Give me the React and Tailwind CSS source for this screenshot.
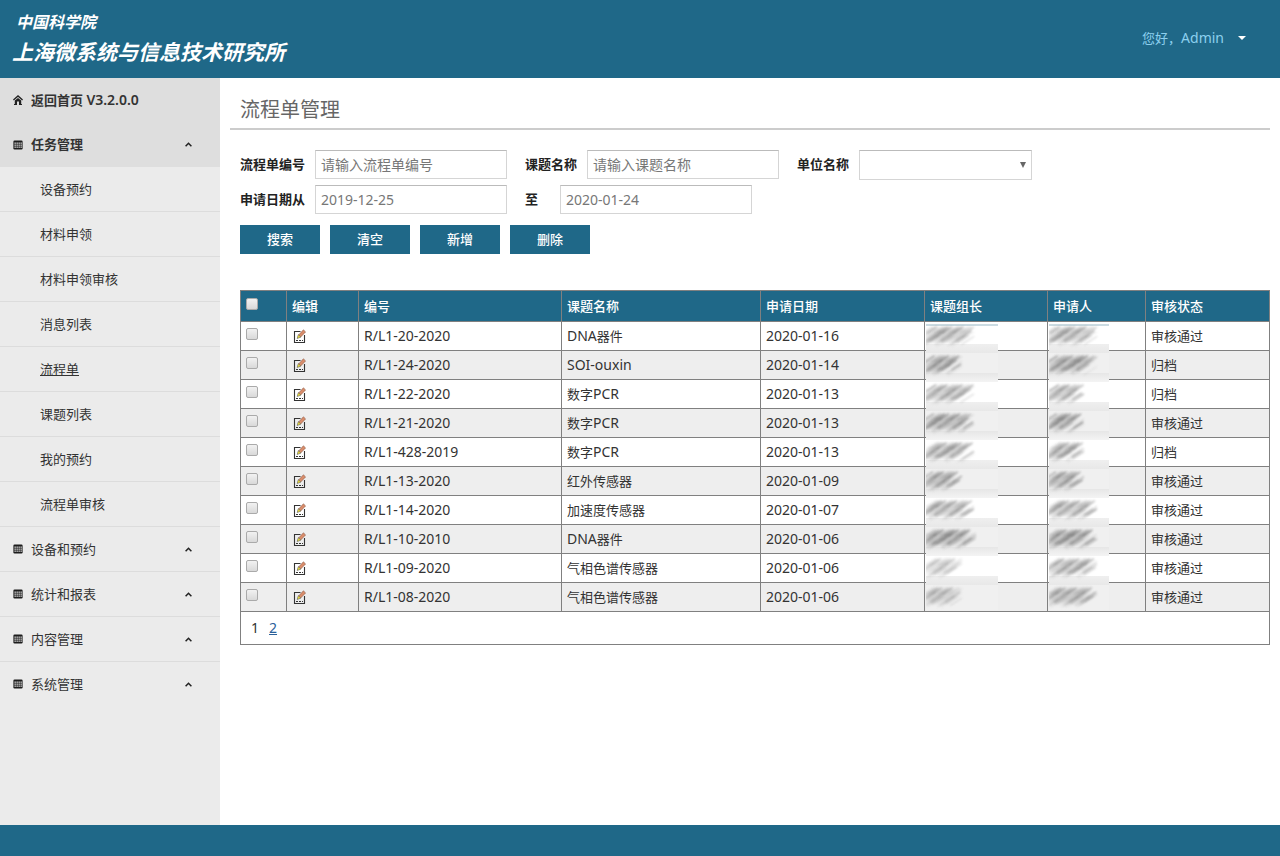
import React from "react";

const subItems = ["设备预约", "材料申领", "材料申领审核", "消息列表", "流程单", "课题列表", "我的预约", "流程单审核"];
const groups = ["设备和预约", "统计和报表", "内容管理", "系统管理"];

const rows = [
  { no: "R/L1-20-2020", latin: "DNA", cjk: "器件", date: "2020-01-16", lead: 48, who: 48, tone: 0.75, status: "审核通过" },
  { no: "R/L1-24-2020", latin: "SOI-ouxin", cjk: "", date: "2020-01-14", lead: 36, who: 48, tone: 0.9, status: "归档" },
  { no: "R/L1-22-2020", latin: "PCR", cjk: "数字", date: "2020-01-13", lead: 48, who: 35, tone: 0.75, status: "归档" },
  { no: "R/L1-21-2020", latin: "PCR", cjk: "数字", date: "2020-01-13", lead: 48, who: 35, tone: 0.9, status: "审核通过" },
  { no: "R/L1-428-2019", latin: "PCR", cjk: "数字", date: "2020-01-13", lead: 48, who: 35, tone: 0.8, status: "归档" },
  { no: "R/L1-13-2020", latin: "", cjk: "红外传感器", date: "2020-01-09", lead: 36, who: 35, tone: 0.85, status: "审核通过" },
  { no: "R/L1-14-2020", latin: "", cjk: "加速度传感器", date: "2020-01-07", lead: 48, who: 48, tone: 0.75, status: "审核通过" },
  { no: "R/L1-10-2010", latin: "DNA", cjk: "器件", date: "2020-01-06", lead: 50, who: 48, tone: 0.95, status: "审核通过" },
  { no: "R/L1-09-2020", latin: "", cjk: "气相色谱传感器", date: "2020-01-06", lead: 36, who: 48, tone: 0.5, status: "审核通过" },
  { no: "R/L1-08-2020", latin: "", cjk: "气相色谱传感器", date: "2020-01-06", lead: 36, who: 48, tone: 0.6, status: "审核通过" },
];

const columns = ["编辑", "编号", "课题名称", "申请日期", "课题组长", "申请人", "审核状态"];

function HomeIcon() {
  return (
    <svg width="10" height="10" viewBox="0 0 10 10" className="shrink-0" aria-hidden="true">
      <path d="M0.4 5 5 1 9.6 5" fill="none" stroke="#222" strokeWidth="1.4" />
      <path d="M5 2.9 8.2 5.6V9H9V10H6V6.5H4V10H1V9H1.8V5.6Z" fill="#222" />
    </svg>
  );
}

function GridIcon() {
  const cells = [];
  for (const y of [3, 5, 7]) {
    for (const x of [1, 3, 5, 7]) cells.push(<rect key={`${x}-${y}`} x={x + 0.5} y={y - 0.5} width="1.3" height="1.3" fill="#e4e4e4" />);
  }
  return (
    <svg width="10" height="10" viewBox="0 0 10 10" className="shrink-0" aria-hidden="true">
      <rect x="0.4" y="0.6" width="9.2" height="8.9" rx="1.2" fill="#1c1c1c" />
      {cells}
    </svg>
  );
}

function ChevronUp() {
  return (
    <svg width="7" height="5" viewBox="0 0 7 5" className="shrink-0" aria-hidden="true">
      <path d="M0.6 4.3 3.5 1.3 6.4 4.3" fill="none" stroke="#222" strokeWidth="1.5" />
    </svg>
  );
}

function EditIcon() {
  return (
    <svg width="13" height="14" viewBox="0 0 13 14" aria-hidden="true">
      <path d="M7.5 2.5H1.5V13.5H11.5V6" fill="none" stroke="#333" strokeWidth="1.1" />
      <path d="M3 11.5h7" stroke="#333" strokeWidth="1" strokeDasharray="2 1" />
      <path d="M5.6 6 10.4 0.8 12.6 2.9 7.7 8Z" fill="#d98d6b" stroke="#7a4a38" strokeWidth="0.5" />
      <path d="M5.3 5.7 7.8 8.1 4.2 9.5Z" fill="#f7e733" stroke="#555" strokeWidth="0.6" />
    </svg>
  );
}

function Smudge({ id, span, width, tone, seed, even, last }) {
  const strokes = [];
  const count = Math.round(span * 1.1);
  for (let i = 0; i < count; i++) {
    const k = (i * 7 + seed * 5 + (i % 4) * 3) % 13;
    const cx = 2 + (i / count) * (span - 6);
    const cy = 6 + ((k * 5) % 12);
    const half = 5 + (k % 4);
    const x2 = Math.min(cx + half, span);
    strokes.push(
      <path
        key={i}
        d={`M${cx - half} ${cy + half * 0.65}L${x2} ${cy - (x2 - cx) * 0.65}`}
        stroke={["#555", "#999", "#777", "#bbb"][k % 4]}
        strokeWidth={k % 3 === 0 ? 1.6 : 1.1}
        opacity={0.25 + (k % 5) * 0.08}
      />
    );
  }
  const height = last ? 25 : 29;
  return (
    <svg width={width} height={height} viewBox={`0 0 ${width} ${height}`} className="absolute left-px top-0.5 z-10" aria-hidden="true">
      <defs>
        <linearGradient id={`${id}-g`} x1="0" x2="0" y1="0" y2="1">
          <stop offset="0" stopColor={even ? "#e6e6e6" : "#efefef"} />
          <stop offset="1" stopColor={even ? "#f4f4f4" : "#e8e8e8"} />
        </linearGradient>
        <filter id={`${id}-f`} x="-10%" y="-20%" width="120%" height="140%">
          <feGaussianBlur stdDeviation="0.8" />
        </filter>
        <filter id={`${id}-s`} x="-20%" y="-30%" width="140%" height="160%">
          <feGaussianBlur stdDeviation="2" />
        </filter>
      </defs>
      <rect width={width} height={height} fill={even ? "#f0f0f0" : "#ffffff"} />
      {!last && <rect y="20" width={width} height="9" fill={`url(#${id}-g)`} />}
      {seed === 0 && <rect width={width} height="2" fill="#cbdbe2" />}
      <path d={`M0 10 10 4H${span - 6}L${span - 14} 14 ${span - 22} 18H0Z`} fill="#888" opacity={0.45 * tone} filter={`url(#${id}-s)`} />
      <g opacity={tone} filter={`url(#${id}-f)`}>{strokes}</g>
    </svg>
  );
}

const checkClass =
  "block size-3 appearance-none rounded-[2px] border border-[#aaa] bg-linear-to-b from-[#f2f2f2] to-[#d9d9d9] checked:bg-[#1f6888]";
const inputClass =
  "h-[29px] w-48 border border-[#d5d5d5] border-t-[#bbb] bg-white px-[5px] text-sm text-[#555] placeholder:text-[#777] outline-none focus:border-[#1f6888]";
const cell = "border border-[#808080] px-[5px]";

function Field({ id, label, children, gap = "gap-2.5" }) {
  return (
    <div className={`flex items-center ${gap}`}>
      <label htmlFor={id} className="pb-0.5 font-semibold">{label}</label>
      {children}
    </div>
  );
}

export default function App() {
  return (
    <div className="flex min-h-screen flex-col bg-white font-['Noto_Sans','Noto_Sans_CJK_SC',sans-serif] text-[13px] leading-5 text-[#333]">
      <header className="flex h-[78px] shrink-0 items-center justify-between bg-[#1f6888] pb-0.5 pl-3 pr-[34px]">
        <div className="font-bold italic text-white">
          <p className="pl-1 text-base leading-7">中国科学院</p>
          <p className="text-[21px] leading-8">上海微系统与信息技术研究所</p>
        </div>
        <button type="button" className="flex items-center gap-3.5 text-[#8cd0ee]">
          <span>您好，<span className="text-sm">Admin</span></span>
          <svg width="8" height="4" viewBox="0 0 8 4" aria-hidden="true">
            <path d="M0 0h8L4 4Z" fill="#fff" />
          </svg>
        </button>
      </header>

      <div className="flex flex-1">
        <nav className="w-[220px] shrink-0 bg-[#ebebeb]">
          <div className="bg-[#dedede] font-semibold">
            <a href="#home" className="flex h-11 items-center gap-2 pl-[13px]">
              <HomeIcon />
              <span>返回首页 <span className="text-sm leading-5">V3.2.0.0</span></span>
            </a>
            <button type="button" className="flex h-[45px] w-full items-center gap-2 pl-[13px] pr-7">
              <GridIcon />
              <span className="flex-1 pb-0.5 text-left">任务管理</span>
              <ChevronUp />
            </button>
          </div>
          <ul>
            {subItems.map((t) => (
              <li key={t} className="border-b border-[#dcdcdc]">
                <a href="#item" className={`flex h-11 items-center pl-10 ${t === "流程单" ? "underline" : ""}`}>{t}</a>
              </li>
            ))}
            {groups.map((t) => (
              <li key={t} className="border-b border-[#dcdcdc] last:border-b-0">
                <button type="button" className="flex h-11 w-full items-center gap-2 pl-[13px] pr-7">
                  <GridIcon />
                  <span className="flex-1 text-left">{t}</span>
                  <ChevronUp />
                </button>
              </li>
            ))}
          </ul>
        </nav>

        <main className="min-w-0 flex-1 px-2.5 pt-3.5">
          <h1 className="border-b-2 border-[#ccc] px-2.5 text-xl leading-9 text-[#666]">流程单管理</h1>

          <form className="pl-2.5 pt-5 text-[#222]" onSubmit={(e) => e.preventDefault()}>
            <div className="flex flex-wrap items-start gap-x-[18px] gap-y-[5px]">
              <Field id="no" label="流程单编号">
                <input id="no" className={inputClass} placeholder="请输入流程单编号" />
              </Field>
              <Field id="topic" label="课题名称">
                <input id="topic" className={inputClass} placeholder="请输入课题名称" />
              </Field>
              <Field id="unit" label="单位名称">
                <span className="relative flex items-center">
                  <select id="unit" className="h-[30px] w-[173px] appearance-none border border-[#d5d5d5] border-t-[#bbb] bg-white px-[5px] text-sm outline-none">
                    <option value=""></option>
                  </select>
                  <svg width="6" height="6" viewBox="0 0 6 6" className="pointer-events-none absolute right-1.5" aria-hidden="true">
                    <path d="M0 0h6L3 6Z" fill="#666" />
                  </svg>
                </span>
              </Field>
            </div>
            <div className="flex flex-wrap gap-x-[18px] pt-[5px]">
              <Field id="from" label="申请日期从">
                <input id="from" className={inputClass} placeholder="2019-12-25" />
              </Field>
              <Field id="to" label="至" gap="gap-[22px]">
                <input id="to" className={inputClass} placeholder="2020-01-24" />
              </Field>
            </div>
            <div className="flex gap-2.5 pt-[11px]">
              {["搜索", "清空", "新增", "删除"].map((t) => (
                <button key={t} type="button" className="h-[29px] w-20 bg-[#1f6888] pb-0.5 font-medium text-white">{t}</button>
              ))}
            </div>
          </form>

          <div className="pl-2.5 pt-9">
            <table className="w-full table-fixed border-collapse text-left">
              <colgroup>
                <col className="w-[46px]" />
                <col className="w-[72px]" />
                <col className="w-[203px]" />
                <col className="w-[199px]" />
                <col className="w-[164px]" />
                <col className="w-[123px]" />
                <col className="w-[98px]" />
                <col className="w-[124px]" />
              </colgroup>
              <thead>
                <tr className="h-[31px] bg-[#1f6888] text-white">
                  <th className={`${cell} pt-[7px] align-top`}>
                    <input type="checkbox" aria-label="全选" className={checkClass} />
                  </th>
                  {columns.map((c) => (
                    <th key={c} className={`${cell} font-medium`}>{c}</th>
                  ))}
                </tr>
              </thead>
              <tbody>
                {rows.map((r, i) => (
                  <tr key={r.no} className="h-[29px] even:bg-[#eee]">
                    <td className={`${cell} pt-1.5 align-top`}>
                      <input type="checkbox" aria-label={r.no} className={checkClass} />
                    </td>
                    <td className={cell}>
                      <button type="button" aria-label="编辑" className="flex pl-px">
                        <EditIcon />
                      </button>
                    </td>
                    <td className={`${cell} text-sm`}>{r.no}</td>
                    <td className={cell}>
                      {r.latin === "PCR" && r.cjk}
                      <span className="text-sm leading-5">{r.latin}</span>
                      {r.latin !== "PCR" && r.cjk}
                    </td>
                    <td className={`${cell} text-sm`}>{r.date}</td>
                    <td className={`${cell} relative`}>
                      <Smudge id={`l${i}`} span={r.lead} width={72} tone={r.tone} seed={i} even={i % 2 === 1} last={i === rows.length - 1} />
                    </td>
                    <td className={`${cell} relative`}>
                      <Smudge id={`w${i}`} span={r.who} width={60} tone={Math.max(r.tone, 0.75)} seed={i} even={i % 2 === 1} last={i === rows.length - 1} />
                    </td>
                    <td className={cell}>{r.status}</td>
                  </tr>
                ))}
              </tbody>
              <tfoot>
                <tr className="h-[33px]">
                  <td colSpan={8} className={`${cell} text-sm`}>
                    <div className="flex gap-2.5 pl-[5px]">
                      <span>1</span>
                      <a href="#page-2" className="text-[#2a6099] underline">2</a>
                    </div>
                  </td>
                </tr>
              </tfoot>
            </table>
          </div>
        </main>
      </div>

      <footer className="h-[31px] shrink-0 bg-[#1f6888]" />
    </div>
  );
}
